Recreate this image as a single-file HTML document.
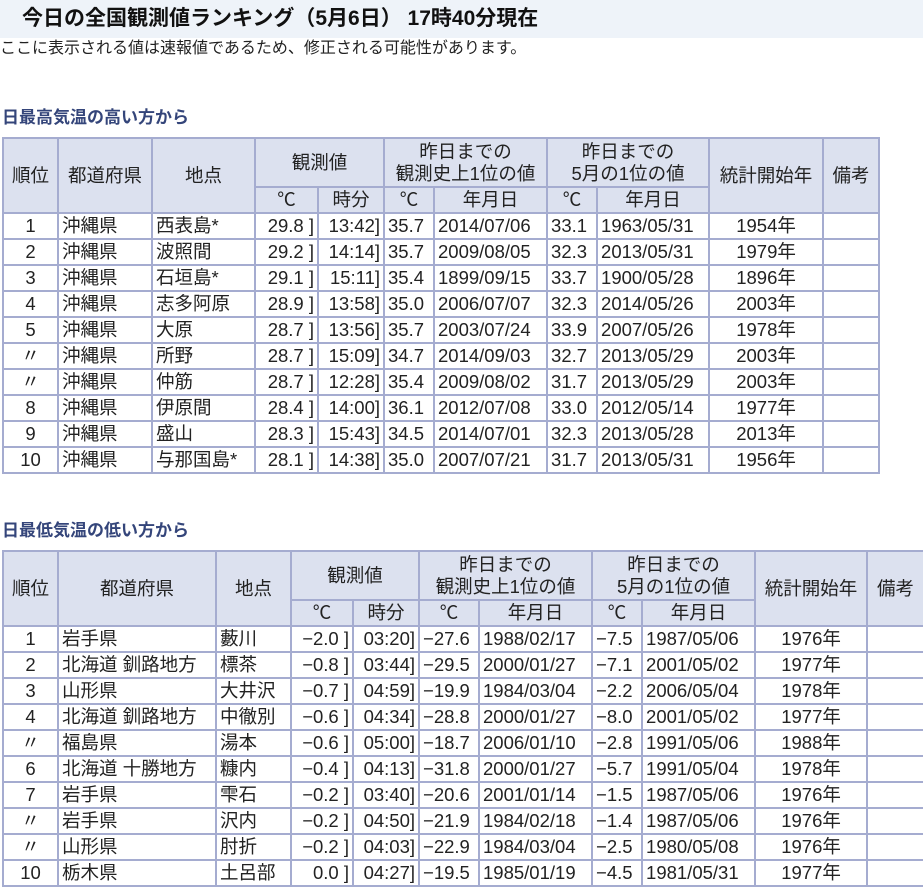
<!DOCTYPE html><html><head><meta charset="utf-8"><style>
body{margin:0;width:923px;height:887px;overflow:hidden;background:#fff;font-family:"Liberation Sans","Noto Sans CJK JP",sans-serif;color:#222}
.title{position:absolute;left:0;top:0;width:923px;height:38px;background:#eef3f9;font-size:21px;font-weight:bold;line-height:38px;box-sizing:border-box;padding-left:22px;color:#111}
.sub{position:absolute;left:0;top:38px;font-size:16px;line-height:22px}
h3{position:absolute;left:2px;margin:0;font-size:17px;line-height:20px;color:#34457a;font-weight:bold}
table{position:absolute;left:2px;border-collapse:collapse;table-layout:fixed;font-size:18.5px}
td,th{border:2px solid #a5acd0;padding:0 3px;white-space:nowrap;overflow:hidden;font-weight:normal}
th{background:#dce1ef;text-align:center}
tr.h1 th{height:47px;line-height:22px;padding:0}
tr.h2 th{height:24px;line-height:24px}
td{height:24px;line-height:24px}
td.c{text-align:center}td.r{text-align:right}
</style></head><body>
<div class="title">今日の全国観測値ランキング（5月6日） 17時40分現在</div>
<div class="sub">ここに表示される値は速報値であるため、修正される可能性があります。</div>
<h3 style="top:108px">日最高気温の高い方から</h3>
<table style="top:137px;width:876px">
<colgroup><col style="width:55px"><col style="width:94px"><col style="width:103px"><col style="width:63px"><col style="width:66px"><col style="width:50px"><col style="width:113px"><col style="width:50px"><col style="width:112px"><col style="width:114px"><col style="width:56px"></colgroup>
<tr class="h1"><th rowspan="2">順位</th><th rowspan="2">都道府県</th><th rowspan="2">地点</th><th colspan="2">観測値</th><th colspan="2">昨日までの<br>観測史上1位の値</th><th colspan="2">昨日までの<br>5月の1位の値</th><th rowspan="2">統計開始年</th><th rowspan="2">備考</th></tr>
<tr class="h2"><th>℃</th><th>時分</th><th>℃</th><th>年月日</th><th>℃</th><th>年月日</th></tr>
<tr><td class="c">1</td><td>沖縄県</td><td>西表島*</td><td class="r">29.8 ]</td><td class="r">13:42]</td><td>35.7</td><td>2014/07/06</td><td>33.1</td><td>1963/05/31</td><td class="c">1954年</td><td></td></tr>
<tr><td class="c">2</td><td>沖縄県</td><td>波照間</td><td class="r">29.2 ]</td><td class="r">14:14]</td><td>35.7</td><td>2009/08/05</td><td>32.3</td><td>2013/05/31</td><td class="c">1979年</td><td></td></tr>
<tr><td class="c">3</td><td>沖縄県</td><td>石垣島*</td><td class="r">29.1 ]</td><td class="r">15:11]</td><td>35.4</td><td>1899/09/15</td><td>33.7</td><td>1900/05/28</td><td class="c">1896年</td><td></td></tr>
<tr><td class="c">4</td><td>沖縄県</td><td>志多阿原</td><td class="r">28.9 ]</td><td class="r">13:58]</td><td>35.0</td><td>2006/07/07</td><td>32.3</td><td>2014/05/26</td><td class="c">2003年</td><td></td></tr>
<tr><td class="c">5</td><td>沖縄県</td><td>大原</td><td class="r">28.7 ]</td><td class="r">13:56]</td><td>35.7</td><td>2003/07/24</td><td>33.9</td><td>2007/05/26</td><td class="c">1978年</td><td></td></tr>
<tr><td class="c">〃</td><td>沖縄県</td><td>所野</td><td class="r">28.7 ]</td><td class="r">15:09]</td><td>34.7</td><td>2014/09/03</td><td>32.7</td><td>2013/05/29</td><td class="c">2003年</td><td></td></tr>
<tr><td class="c">〃</td><td>沖縄県</td><td>仲筋</td><td class="r">28.7 ]</td><td class="r">12:28]</td><td>35.4</td><td>2009/08/02</td><td>31.7</td><td>2013/05/29</td><td class="c">2003年</td><td></td></tr>
<tr><td class="c">8</td><td>沖縄県</td><td>伊原間</td><td class="r">28.4 ]</td><td class="r">14:00]</td><td>36.1</td><td>2012/07/08</td><td>33.0</td><td>2012/05/14</td><td class="c">1977年</td><td></td></tr>
<tr><td class="c">9</td><td>沖縄県</td><td>盛山</td><td class="r">28.3 ]</td><td class="r">15:43]</td><td>34.5</td><td>2014/07/01</td><td>32.3</td><td>2013/05/28</td><td class="c">2013年</td><td></td></tr>
<tr><td class="c">10</td><td>沖縄県</td><td>与那国島*</td><td class="r">28.1 ]</td><td class="r">14:38]</td><td>35.0</td><td>2007/07/21</td><td>31.7</td><td>2013/05/31</td><td class="c">1956年</td><td></td></tr>
</table>
<h3 style="top:521px">日最低気温の低い方から</h3>
<table style="top:550px;width:921px">
<colgroup><col style="width:55px"><col style="width:158px"><col style="width:75px"><col style="width:62px"><col style="width:66px"><col style="width:60px"><col style="width:113px"><col style="width:50px"><col style="width:113px"><col style="width:112px"><col style="width:57px"></colgroup>
<tr class="h1"><th rowspan="2">順位</th><th rowspan="2">都道府県</th><th rowspan="2">地点</th><th colspan="2">観測値</th><th colspan="2">昨日までの<br>観測史上1位の値</th><th colspan="2">昨日までの<br>5月の1位の値</th><th rowspan="2">統計開始年</th><th rowspan="2">備考</th></tr>
<tr class="h2"><th>℃</th><th>時分</th><th>℃</th><th>年月日</th><th>℃</th><th>年月日</th></tr>
<tr><td class="c">1</td><td>岩手県</td><td>藪川</td><td class="r">−2.0 ]</td><td class="r">03:20]</td><td>−27.6</td><td>1988/02/17</td><td>−7.5</td><td>1987/05/06</td><td class="c">1976年</td><td></td></tr>
<tr><td class="c">2</td><td>北海道 釧路地方</td><td>標茶</td><td class="r">−0.8 ]</td><td class="r">03:44]</td><td>−29.5</td><td>2000/01/27</td><td>−7.1</td><td>2001/05/02</td><td class="c">1977年</td><td></td></tr>
<tr><td class="c">3</td><td>山形県</td><td>大井沢</td><td class="r">−0.7 ]</td><td class="r">04:59]</td><td>−19.9</td><td>1984/03/04</td><td>−2.2</td><td>2006/05/04</td><td class="c">1978年</td><td></td></tr>
<tr><td class="c">4</td><td>北海道 釧路地方</td><td>中徹別</td><td class="r">−0.6 ]</td><td class="r">04:34]</td><td>−28.8</td><td>2000/01/27</td><td>−8.0</td><td>2001/05/02</td><td class="c">1977年</td><td></td></tr>
<tr><td class="c">〃</td><td>福島県</td><td>湯本</td><td class="r">−0.6 ]</td><td class="r">05:00]</td><td>−18.7</td><td>2006/01/10</td><td>−2.8</td><td>1991/05/06</td><td class="c">1988年</td><td></td></tr>
<tr><td class="c">6</td><td>北海道 十勝地方</td><td>糠内</td><td class="r">−0.4 ]</td><td class="r">04:13]</td><td>−31.8</td><td>2000/01/27</td><td>−5.7</td><td>1991/05/04</td><td class="c">1978年</td><td></td></tr>
<tr><td class="c">7</td><td>岩手県</td><td>雫石</td><td class="r">−0.2 ]</td><td class="r">03:40]</td><td>−20.6</td><td>2001/01/14</td><td>−1.5</td><td>1987/05/06</td><td class="c">1976年</td><td></td></tr>
<tr><td class="c">〃</td><td>岩手県</td><td>沢内</td><td class="r">−0.2 ]</td><td class="r">04:50]</td><td>−21.9</td><td>1984/02/18</td><td>−1.4</td><td>1987/05/06</td><td class="c">1976年</td><td></td></tr>
<tr><td class="c">〃</td><td>山形県</td><td>肘折</td><td class="r">−0.2 ]</td><td class="r">04:03]</td><td>−22.9</td><td>1984/03/04</td><td>−2.5</td><td>1980/05/08</td><td class="c">1976年</td><td></td></tr>
<tr><td class="c">10</td><td>栃木県</td><td>土呂部</td><td class="r">0.0 ]</td><td class="r">04:27]</td><td>−19.5</td><td>1985/01/19</td><td>−4.5</td><td>1981/05/31</td><td class="c">1977年</td><td></td></tr>
</table>
</body></html>
